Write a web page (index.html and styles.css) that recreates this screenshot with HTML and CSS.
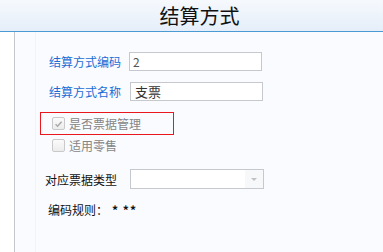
FILE: index.html
```html
<!DOCTYPE html>
<html lang="zh-CN">
<head>
<meta charset="utf-8">
<title>结算方式</title>
<link rel="stylesheet" href="styles.css">
</head>
<body>
<div class="page">
  <header class="header"><h1 class="title">结算方式</h1></header>
  <div class="main">
    <div class="gutter"></div>
    <div class="content">
      <div class="rail"></div>
      <div class="form">
        <div class="row row-code">
          <label class="label label-blue">结算方式编码</label>
          <div class="input">2</div>
        </div>
        <div class="row row-name">
          <label class="label label-blue">结算方式名称</label>
          <div class="input input-name">支票</div>
        </div>
        <div class="highlight">
          <span class="check"><svg viewBox="0 0 12 12" width="12" height="12"><path d="M2.8 6.2 L5 8.4 L9.4 3.6" fill="none" stroke="#a9a9a9" stroke-width="1.6"/></svg></span>
          <span class="check-text">是否票据管理</span>
        </div>
        <div class="check-row">
          <span class="check"></span>
          <span class="check-text">适用零售</span>
        </div>
        <div class="row row-type">
          <label class="label label-dark">对应票据类型</label>
          <div class="select"><span class="select-btn"><span class="arrow"></span></span></div>
        </div>
        <div class="rules">编码规则：<span class="rules-val">* **</span></div>
      </div>
    </div>
  </div>
</div>
</body>
</html>
```

FILE: styles.css
```css
* { box-sizing: border-box; }
html, body { margin: 0; padding: 0; }
body {
  width: 383px;
  height: 252px;
  overflow: hidden;
  background: #ffffff;
  font-family: "Noto Sans CJK SC", "Noto Sans", sans-serif;
  font-size: 12px;
  color: #111;
}
.page { display: flex; flex-direction: column; height: 252px; }
.header {
  height: 32px;
  padding-left: 16px;
  background: linear-gradient(#f6f9fd, #e5eef9);
  border-bottom: 1px solid #4b9ad3;
  display: flex;
  align-items: center;
  justify-content: center;
}
.title {
  margin: 0;
  font-size: 20px;
  font-weight: normal;
  line-height: 1;
  color: #111;
  padding-top: 1px;
}
.main { flex: 1; display: flex; }
.gutter { width: 15px; background: #fff; border-right: 1px solid #c3c7cb; }
.content { flex: 1; display: flex; background: #f9fbff; }
.rail { width: 21px; border-right: 1px solid #f0f3f9; }
.form { flex: 1; padding-top: 20px; }
.row { display: flex; align-items: center; }
.label { line-height: 19px; }
.label-blue { color: #1a6cd4; }
.label-dark { color: #111; }
.row-code { height: 19px; padding-left: 13px; }
.row-code .label { width: 80px; }
.row-name { height: 19px; padding-left: 13px; margin-top: 11px; }
.row-name .label { width: 81px; }
.input {
  width: 133px;
  height: 19px;
  border: 1px solid #c5c9ce;
  background: #fff;
  color: #555;
  font-size: 12px;
  line-height: 17px;
  padding-left: 3px;
}
.input-name { font-size: 13px; color: #333; padding-left: 4px; }
.highlight {
  margin: 11px 0 0 4px;
  width: 134px;
  height: 23px;
  border: 1px solid #e8181c;
  display: flex;
  align-items: center;
  padding-left: 11px;
}
.check {
  width: 13px;
  height: 13px;
  border: 1px solid #c9c9c9;
  border-radius: 2px;
  background: linear-gradient(#fbfbfb, #ececec);
  display: inline-flex;
  align-items: center;
  justify-content: center;
  flex: none;
}
.check svg { display: block; }
.check-text { color: #858585; margin-left: 4px; font-size: 12px; }
.check-row {
  height: 20px;
  margin-left: 16px;
  display: flex;
  align-items: center;
}
.row-type { margin-top: 14px; height: 20px; padding-left: 9px; }
.row-type .label { width: 85px; }
.select {
  width: 134px;
  height: 20px;
  border: 1px solid #c5c9ce;
  background: #fff;
  display: flex;
  justify-content: flex-end;
}
.select-btn {
  width: 18px;
  height: 18px;
  background: #f7f8fa;
  display: flex;
  align-items: center;
  justify-content: center;
}
.arrow {
  width: 0;
  height: 0;
  border-left: 3px solid transparent;
  border-right: 3px solid transparent;
  border-top: 3px solid #bfc1c4;
  margin-top: 1px;
}
.rules { margin: 12px 0 0 12px; height: 18px; line-height: 18px; color: #111; }
.rules-val { margin-left: 4px; font-weight: bold; letter-spacing: 1px; }
```
